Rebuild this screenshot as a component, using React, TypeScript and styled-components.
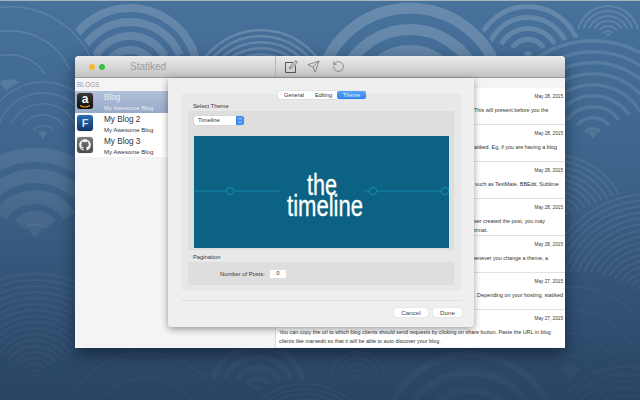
import { FaGithub } from "react-icons/fa";
import { RotateCcw, Send } from "lucide-react";
import styled, { createGlobalStyle } from "styled-components";

const GlobalStyle = createGlobalStyle`
  html, body {
    margin: 0;
    width: 640px;
    height: 400px;
    overflow: hidden;
    background: #3f6488;
    font-family: "Liberation Sans", Arial, sans-serif;
  }
`;

const Desktop = styled.div`
  position: relative;
  width: 640px;
  height: 400px;
  box-sizing: border-box;
  padding: 56px 75px 52px;
  border-top: 1px solid #a9b4bf;
  overflow: hidden;
`;

const Backdrop = styled.svg`
  position: absolute;
  left: 0;
  top: 0;
`;

const Window = styled.div`
  position: relative;
  width: 490px;
  height: 292px;
  margin-top: -1px;
  display: flex;
  flex-direction: column;
  border-radius: 4px 4px 2px 2px;
  background: #fff;
  box-shadow: 0 6px 16px rgba(5, 15, 30, 0.55);
`;

const TitleBar = styled.header`
  height: 22px;
  flex: none;
  display: flex;
  border-radius: 4px 4px 0 0;
  background: linear-gradient(#ececec, #c2c2c2);
  border-bottom: 1px solid #9a9a9a;
  box-sizing: border-box;
`;

const TitleSide = styled.div`
  width: 201px;
  display: flex;
  align-items: center;
  padding-left: 4px;
  box-sizing: border-box;
  border-right: 1px solid #b4b4b4;
`;

const Light = styled.span<{ $color: string }>`
  width: 6px;
  height: 6px;
  margin-right: 4px;
  border-radius: 50%;
  background: ${(p) => p.$color};
`;

const AppName = styled.span`
  margin-left: 21px;
  font-size: 10px;
  color: #9c9c9c;
`;

const ToolIcons = styled.div`
  display: flex;
  align-items: center;
  gap: 9px;
  padding-left: 9px;
  color: #555;
`;

const UndoSlot = styled.span`
  display: flex;
  margin-left: 3px;
`;

const Body = styled.div`
  flex: 1;
  min-height: 0;
  display: flex;
`;

const Sidebar = styled.aside`
  width: 201px;
  flex: none;
  background: #f4f4f4;
  border-right: 1px solid #dcdcdc;
  box-sizing: border-box;
`;

const SideHeading = styled.div`
  height: 13px;
  padding: 3px 2px 0;
  box-sizing: border-box;
  font-size: 6.5px;
  color: #9d9d9d;
`;

const BlogRow = styled.div<{ $selected?: boolean }>`
  height: 22px;
  display: flex;
  padding: 2px 0 0 2px;
  box-sizing: border-box;
  background: ${(p) => (p.$selected ? "linear-gradient(#b2c0d9, #97aac9)" : "#fff")};
  color: ${(p) => (p.$selected ? "#e8edf5" : "#333")};
`;

const BlogIcon = styled.div<{ $bg: string }>`
  width: 16px;
  height: 16px;
  flex: none;
  border-radius: 3px;
  display: flex;
  flex-direction: column;
  align-items: center;
  justify-content: center;
  background: ${(p) => p.$bg};
  color: #fff;
  box-shadow: 0 0 1px #777;
`;

const AmazonLetter = styled.span`
  font-size: 12px;
  line-height: 10px;
  font-weight: 700;
`;

const Smile = styled.svg`
  margin-top: 1px;
`;

const FLetter = styled.span`
  font-size: 11px;
  font-weight: 700;
  color: #cfe0f5;
`;

const BlogText = styled.div`
  margin-left: 11px;
`;

const BlogName = styled.div`
  font-size: 8.2px;
  line-height: 10px;
`;

const BlogSub = styled.div`
  font-size: 6px;
  line-height: 8px;
  margin-top: 1px;
  font-weight: 500;
`;

const Posts = styled.main`
  flex: 1;
  min-width: 0;
  padding-top: 10px;
  background: #f4f4f4;
`;

const PostRow = styled.article`
  height: 37px;
  box-sizing: border-box;
  padding: 6px 2px 0 3px;
  background: #fff;
  border-bottom: 1px solid #e2e2e2;
  &:last-child {
    border-bottom: 0;
  }
`;

const PostDate = styled.div`
  height: 9px;
  font-size: 4.7px;
  line-height: 6px;
  text-align: right;
  color: #333;
`;

const PostText = styled.p<{ $indent: number }>`
  margin: 2.5px 0 0;
  padding-left: ${(p) => p.$indent}px;
  font-size: 5.4px;
  line-height: 9px;
  white-space: pre;
  color: #333;
`;

const Sheet = styled.section`
  position: absolute;
  left: 93px;
  top: 22px;
  width: 306px;
  height: 249px;
  padding: 16px 13px 0;
  box-sizing: border-box;
  background: #efefef;
  border-radius: 0 0 3px 3px;
  box-shadow: 0 2px 7px rgba(0, 0, 0, 0.4);
`;

const TabPanel = styled.div`
  position: relative;
  height: 196px;
  padding: 8px 7px 0;
  box-sizing: border-box;
  background: #e8e8e8;
  border-radius: 2px;
`;

const Tabs = styled.nav`
  position: absolute;
  left: 97px;
  top: -3px;
  display: flex;
  background: #fff;
  border-radius: 2px;
  box-shadow: 0 0 1px rgba(0, 0, 0, 0.35);
`;

const Tab = styled.span<{ $active?: boolean; $w: number }>`
  width: ${(p) => p.$w}px;
  height: 8px;
  font-size: 5.6px;
  line-height: 8px;
  text-align: center;
  border-radius: 2px;
  color: ${(p) => (p.$active ? "#e4f0ff" : "#333")};
  background: ${(p) => (p.$active ? "linear-gradient(#5aa5f8, #2f83ee)" : "transparent")};
`;

const GroupLabel = styled.div`
  height: 9px;
  padding-left: 5px;
  font-size: 5.8px;
  line-height: 9px;
  color: #333;
`;

const ThemeGroup = styled.div`
  height: 139px;
  padding: 5px 5px 0 6px;
  box-sizing: border-box;
  background: #dedede;
`;

const Select = styled.div`
  width: 50px;
  height: 9px;
  display: flex;
  justify-content: space-between;
  background: #fff;
  border-radius: 2px;
  box-shadow: 0 0 1px rgba(0, 0, 0, 0.3);
  font-size: 5.8px;
  line-height: 9px;
  padding-left: 4px;
  box-sizing: border-box;
  color: #333;
`;

const Stepper = styled.svg`
  border-radius: 0 2px 2px 0;
`;

const Preview = styled.svg`
  display: block;
  margin-top: 11px;
`;

const PaginationLabel = styled(GroupLabel)`
  margin-top: 3px;
`;

const PaginationGroup = styled.div`
  height: 23px;
  display: flex;
  align-items: center;
  padding-left: 32px;
  box-sizing: border-box;
  background: #dedede;
  font-size: 5.8px;
  color: #333;
`;

const NumberInput = styled.span`
  width: 16px;
  height: 8px;
  margin-left: 5px;
  background: #fff;
  line-height: 7px;
  text-align: center;
  font-size: 5.8px;
`;

const SheetFooter = styled.footer`
  height: 27px;
  margin-top: 10px;
  display: flex;
  justify-content: flex-end;
  gap: 5px;
  padding: 7px 0 0;
  border-top: 1px solid #e2e2e2;
  margin-right: -1px;
`;

const Button = styled.span<{ $w: number }>`
  width: ${(p) => p.$w}px;
  height: 9px;
  background: #fff;
  border-radius: 2px;
  box-shadow: 0 0 1px rgba(0, 0, 0, 0.3);
  font-size: 6.2px;
  line-height: 9px;
  text-align: center;
  color: #444;
`;

interface ScaleDef {
  x: number;
  y: number;
  r: number;
  step: number;
  width: number;
  tone: number;
}

// drawn back to front, every scale hides the ones behind it
const scales: ScaleDef[] = [
  { x: 130, y: 75, r: 72, step: 14, width: 8, tone: 0.17 },
  { x: 10, y: 95, r: 90, step: 24, width: 1.5, tone: 0.13 },
  { x: 528, y: 58, r: 55, step: 11, width: 5, tone: 0.17 },
  { x: 608, y: 36, r: 32, step: 5, width: 2, tone: 0.14 },
  { x: 410, y: 100, r: 98, step: 21, width: 11, tone: 0.19 },
  { x: 261, y: 100, r: 72, step: 6, width: 2.5, tone: 0.18 },
  { x: 43, y: 138, r: 58, step: 11, width: 1.5, tone: 0.12 },
  { x: 593, y: 138, r: 100, step: 11, width: 3.5, tone: 0.12 },
  { x: 35, y: 237, r: 90, step: 21, width: 14, tone: 0.1 },
  { x: 555, y: 225, r: 72, step: 6, width: 2, tone: 0.1 },
  { x: 650, y: 302, r: 110, step: 6, width: 2, tone: 0.1 },
  { x: 35, y: 377, r: 105, step: 6, width: 2.2, tone: 0.08 },
  { x: 570, y: 380, r: 95, step: 23, width: 1.5, tone: 0.07 },
  { x: 145, y: 435, r: 84, step: 25, width: 1.5, tone: 0.08 },
  { x: 258, y: 392, r: 50, step: 11, width: 6, tone: 0.08 },
  { x: 358, y: 378, r: 28, step: 6, width: 2, tone: 0.07 },
  { x: 470, y: 440, r: 90, step: 18, width: 7, tone: 0.08 },
  { x: 305, y: 455, r: 73, step: 5, width: 2, tone: 0.1 },
  { x: 625, y: 440, r: 75, step: 7, width: 2, tone: 0.07 },
];

const polar = (x: number, y: number, r: number, deg: number) => {
  const a = (deg * Math.PI) / 180;
  return `${(x + r * Math.sin(a)).toFixed(1)} ${(y - r * Math.cos(a)).toFixed(1)}`;
};

const arc = (x: number, y: number, r: number, half: number) =>
  `M${polar(x, y, r, -half)}A${r} ${r} 0 0 1 ${polar(x, y, r, half)}`;

const Scale = ({ x, y, r, step, width, tone }: ScaleDef) => {
  const rings: number[] = [];
  for (let cur = r - width / 2; cur > step * 0.9; cur -= step) rings.push(cur);
  return (
    <g>
      <path
        d={`M${x} ${y}L${polar(x, y, r + 3, -80)}A${r + 3} ${r + 3} 0 0 1 ${polar(x, y, r + 3, 80)}Z`}
        fill="#47729c"
      />
      {rings.map((cur) => (
        <path
          key={cur}
          d={arc(x, y, cur, 42 + (34 * cur) / r)}
          fill="none"
          stroke="#fff"
          strokeOpacity={tone}
          strokeWidth={width}
        />
      ))}
      <path
        d={`M${x} ${y}L${polar(x, y, step * 0.7, -38)}A${step * 0.7} ${step * 0.7} 0 0 1 ${polar(x, y, step * 0.7, 38)}Z`}
        fill="#fff"
        fillOpacity={tone}
      />
    </g>
  );
};

const posts = [
  { date: "May 28, 2015", indent: 195, text: "This will present before you the" },
  { date: "May 28, 2015", indent: 191, text: "statiked. Eg, if you are having a blog" },
  { date: "May 28, 2015", indent: 196, text: "such as TextMate, BBEdit, Sublime" },
  { date: "May 28, 2015", indent: 192, text: "user created the post, you may\nformat." },
  { date: "May 28, 2015", indent: 188, text: "Whenever you change a theme, a" },
  { date: "May 27, 2015", indent: 195, text: ". Depending on your hosting, statiked" },
  {
    date: "May 27, 2015",
    indent: 0,
    text: "You can copy the url to which blog clients should send requests by clicking on share button. Paste the URL in blog\nclients like marsedit so that it will be able to auto discover your blog.",
  },
];

const blogs = ["Blog", "My Blog 2", "My Blog 3"];

const blogIcon = (index: number) => {
  if (index === 0) {
    return (
      <BlogIcon $bg="linear-gradient(#3a3a3a, #0c0c0c)">
        <AmazonLetter>a</AmazonLetter>
        <Smile width="12" height="3" viewBox="0 0 12 3">
          <path d="M1 .5Q6 3.5 11 .5" fill="none" stroke="#f09a22" strokeWidth="1.2" />
        </Smile>
      </BlogIcon>
    );
  }
  if (index === 1) {
    return (
      <BlogIcon $bg="linear-gradient(#2c6db5, #0f3566)">
        <FLetter>F</FLetter>
      </BlogIcon>
    );
  }
  return (
    <BlogIcon $bg="linear-gradient(#7c7c7c, #4a4a4a)">
      <FaGithub size={12} color="#f2f2f2" />
    </BlogIcon>
  );
};

const ComposeIcon = () => (
  <svg width="13" height="13" viewBox="0 0 13 13" fill="none" stroke="currentColor" strokeWidth="1">
    <path d="M8 2.5H.5v10h10V5.5" />
    <path d="M4.5 8.5l.6-2L11 .7l1.4 1.4L6.5 8z" strokeWidth=".8" />
  </svg>
);

export default function App() {
  return (
    <>
      <GlobalStyle />
      <Desktop>
        <Backdrop width="640" height="400" viewBox="0 0 640 400">
          <defs>
            <linearGradient id="fade" x1="0" y1="0" x2="0" y2="1">
              <stop offset="0" stopColor="#16263f" stopOpacity="0" />
              <stop offset="0.45" stopColor="#16263f" stopOpacity="0.2" />
              <stop offset="1" stopColor="#16263f" stopOpacity="0.62" />
            </linearGradient>
          </defs>
          <rect width="640" height="400" fill="#47729c" />
          {scales.map((s) => (
            <Scale key={`${s.x}-${s.y}`} {...s} />
          ))}
          <rect width="640" height="400" fill="url(#fade)" />
        </Backdrop>
        <Window>
          <TitleBar>
            <TitleSide>
              <Light $color="#d6d6d6" />
              <Light $color="#f5b82e" />
              <Light $color="#37c23f" />
              <AppName>Statiked</AppName>
            </TitleSide>
            <ToolIcons>
              <ComposeIcon />
              <Send size={13} strokeWidth={1.1} />
              <UndoSlot>
                <RotateCcw size={13} strokeWidth={1.1} />
              </UndoSlot>
            </ToolIcons>
          </TitleBar>
          <Body>
            <Sidebar>
              <SideHeading>BLOGS</SideHeading>
              {blogs.map((name, i) => (
                <BlogRow key={name} $selected={i === 0}>
                  {blogIcon(i)}
                  <BlogText>
                    <BlogName>{name}</BlogName>
                    <BlogSub>My Awesome Blog</BlogSub>
                  </BlogText>
                </BlogRow>
              ))}
            </Sidebar>
            <Posts>
              {posts.map((post, i) => (
                <PostRow key={i}>
                  <PostDate>{post.date}</PostDate>
                  <PostText $indent={post.indent}>{post.text}</PostText>
                </PostRow>
              ))}
            </Posts>
          </Body>
          <Sheet>
            <TabPanel>
              <Tabs>
                <Tab $w={32}>General</Tab>
                <Tab $w={27}>Editing</Tab>
                <Tab $w={29} $active>
                  Theme
                </Tab>
              </Tabs>
              <GroupLabel>Select Theme</GroupLabel>
              <ThemeGroup>
                <Select>
                  Timeline
                  <Stepper width="8" height="9" viewBox="0 0 8 9">
                    <rect width="8" height="9" fill="#3b8ef0" />
                    <path d="M2.5 3.5L4 2l1.5 1.5M2.5 5.5L4 7l1.5-1.5" fill="none" stroke="#fff" strokeWidth=".7" />
                  </Stepper>
                </Select>
                <Preview width="255" height="112" viewBox="0 0 255 112">
                  <rect width="255" height="112" fill="#0b6282" />
                  <g fill="none" stroke="#1584ad" strokeWidth="1.2">
                    <path d="M0 55H86M169 55H255" />
                    <circle cx="36" cy="55" r="3.6" fill="#0b6282" />
                    <circle cx="179" cy="55" r="3.6" fill="#0b6282" />
                    <circle cx="251" cy="55" r="3.6" fill="#0b6282" />
                  </g>
                  <text
                    fontFamily="Liberation Sans, sans-serif"
                    fontSize="29"
                    fill="#fff"
                    stroke="#fff"
                    strokeWidth=".35"
                  >
                    <tspan x="113" y="59" textLength="30" lengthAdjust="spacingAndGlyphs">
                      the
                    </tspan>
                    <tspan x="93" y="80" textLength="76" lengthAdjust="spacingAndGlyphs">
                      timeline
                    </tspan>
                  </text>
                </Preview>
              </ThemeGroup>
              <PaginationLabel>Pagination</PaginationLabel>
              <PaginationGroup>
                Number of Posts:
                <NumberInput>0</NumberInput>
              </PaginationGroup>
            </TabPanel>
            <SheetFooter>
              <Button $w={34}>Cancel</Button>
              <Button $w={29}>Done</Button>
            </SheetFooter>
          </Sheet>
        </Window>
      </Desktop>
    </>
  );
}
